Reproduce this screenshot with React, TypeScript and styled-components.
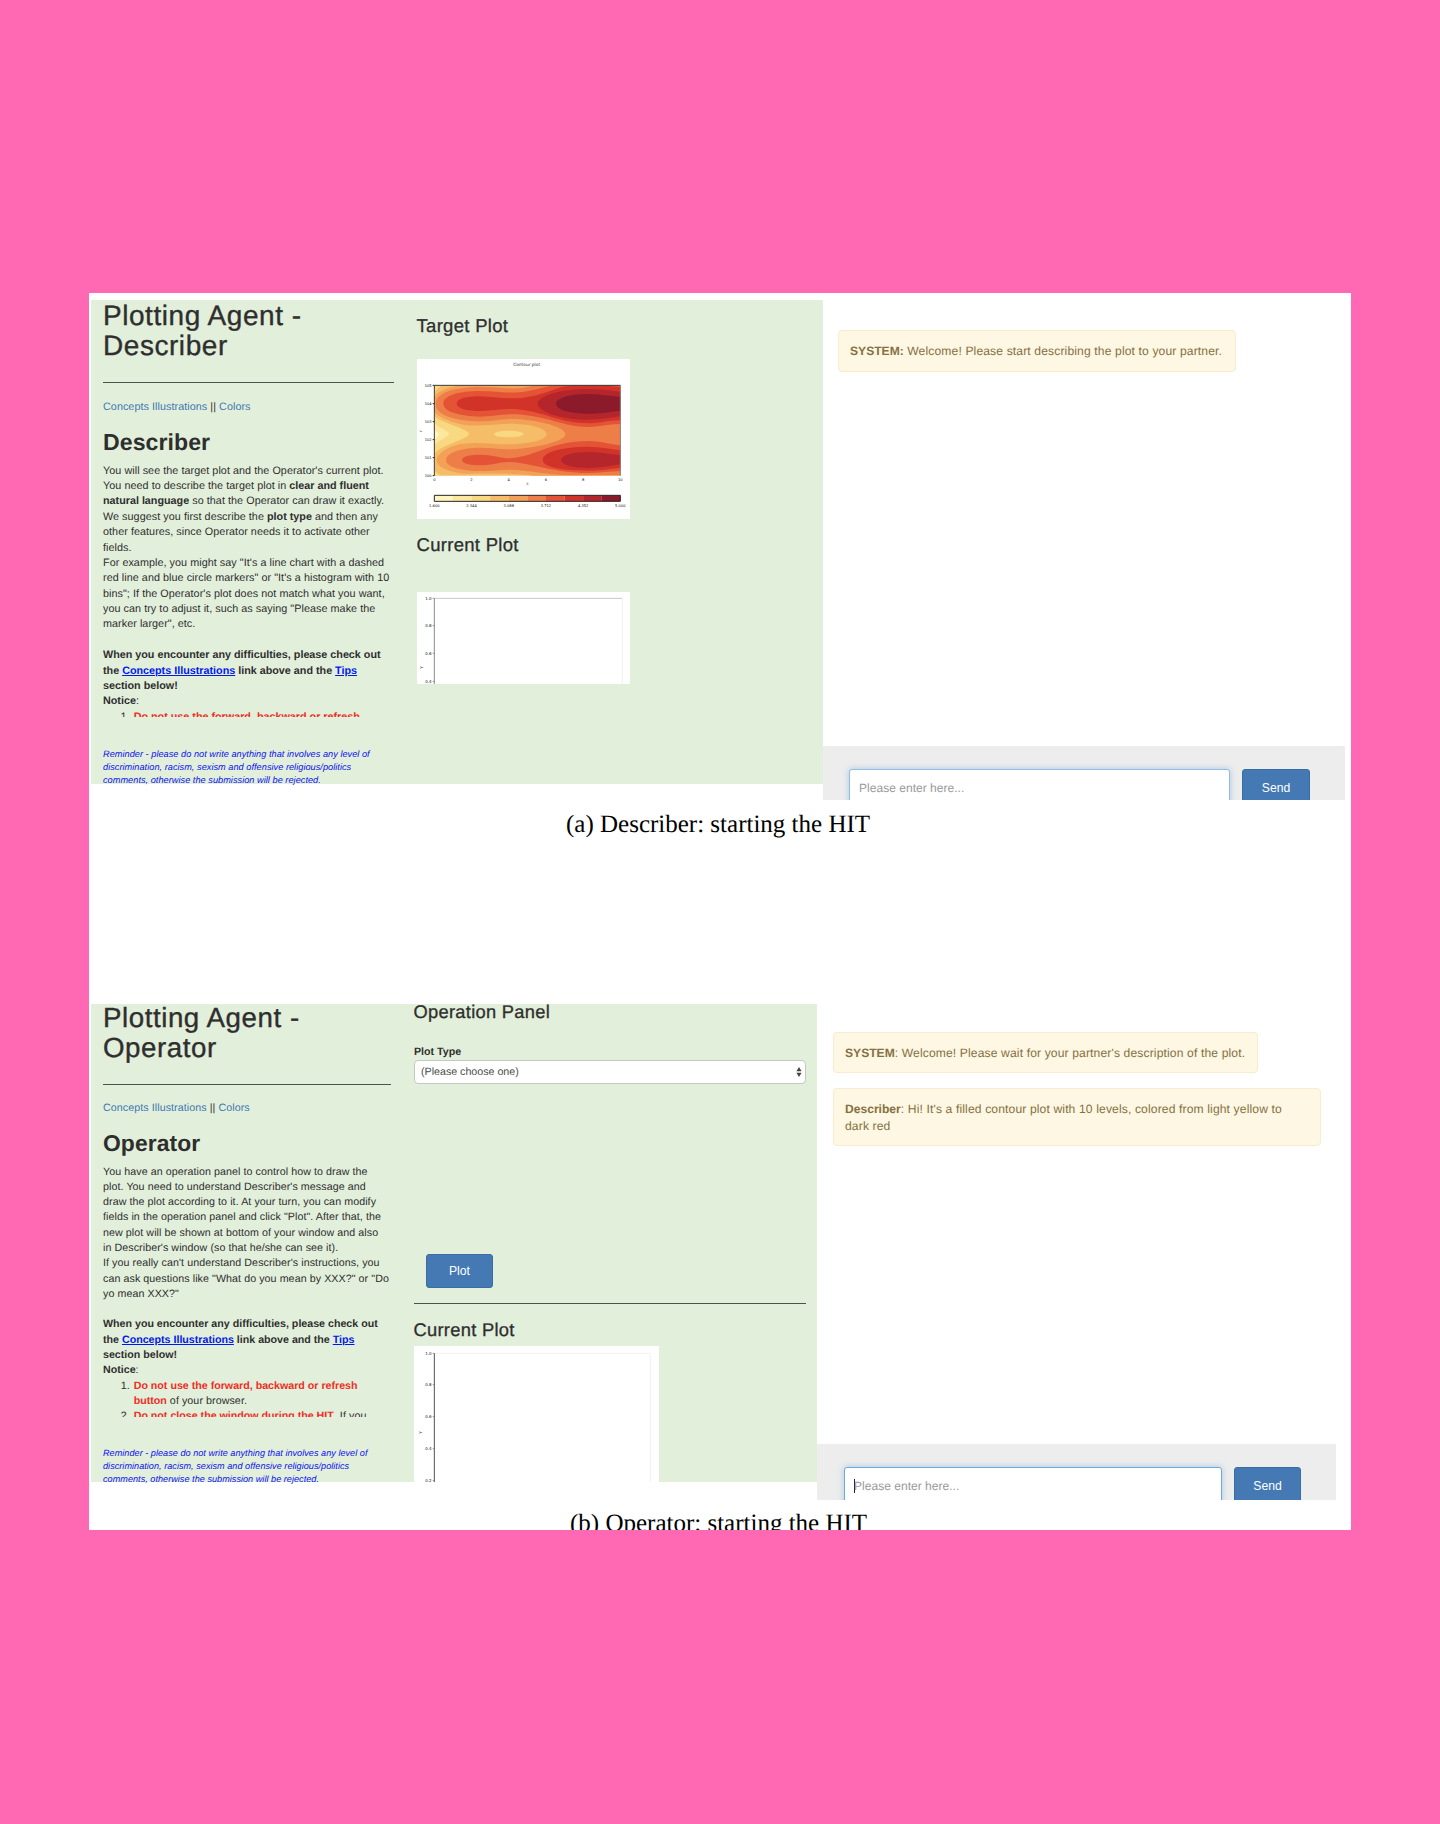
import React from 'react';
import styled, { createGlobalStyle } from 'styled-components';

const GlobalStyle = createGlobalStyle`
  html, body { margin: 0; padding: 0; background: #ff69b4; }
  * { box-sizing: border-box; }
  body {
    font-family: "Liberation Sans", Arial, sans-serif;
    color: #2e2e2e;
    text-rendering: geometricPrecision;
  }
  b { letter-spacing: 0; }
`;

const Page = styled.div`
  width: 1440px;
  height: 1824px;
  padding: 293px 89px;
  background: #ff69b4;
`;

const Sheet = styled.main`
  width: 1262px;
  height: 1237px;
  overflow: hidden;
  background: #fff;
  padding: 7px 0 0 2px;
`;

const Figure = styled.figure<{ $gap?: number }>`
  margin: ${p => p.$gap ?? 0}px 0 0;
`;

const Shot = styled.div<{ $h: number }>`
  display: flex;
  align-items: flex-start;
  height: ${p => p.$h}px;
`;

const Caption = styled.figcaption<{ $left: number; $top: number }>`
  margin: ${p => p.$top}px 0 0 ${p => p.$left}px;
  font: 25px/30px "Liberation Serif", "Times New Roman", serif;
  color: #000;
  white-space: nowrap;
`;

const Green = styled.section<{ $w: number; $h: number }>`
  display: flex;
  width: ${p => p.$w}px;
  height: ${p => p.$h}px;
  background: #e2efdb;
`;

const Side = styled.div<{ $w: number; $top: number; $size: number; $line: number; $track: number }>`
  width: ${p => p.$w}px;
  flex: none;
  margin: ${p => p.$top}px 0 0 12px;
  font-size: ${p => p.$size}px;
  line-height: ${p => p.$line}px;
  letter-spacing: ${p => p.$track}px;
  white-space: nowrap;
`;

const Title = styled.h1`
  margin: 0;
  font-size: 2.6em;
  line-height: 30px;
  font-weight: 400;
  letter-spacing: 0.55px;
  -webkit-text-stroke: 0.35px currentColor;
`;

const Rule = styled.hr<{ $top: number; $bottom: number }>`
  height: 1px;
  border: 0;
  background: #4d524b;
  margin: ${p => p.$top}px 0 ${p => p.$bottom}px;
`;

const Links = styled.div`
  a { color: #3f77b3; text-decoration: none; }
`;

const Role = styled.h2<{ $top: number }>`
  margin: ${p => p.$top}px 0 8px;
  font-size: 2.145em;
  line-height: 25.4px;
  font-weight: 700;
`;

const Instructions = styled.div<{ $h: number }>`
  height: ${p => p.$h}px;
  overflow: hidden;
  b a { color: #0018f0; text-decoration: underline; }
`;

const Rules = styled.ol`
  margin: 0;
  padding: 0;
  list-style: none;
`;

const RuleItem = styled.li`
  display: flex;
  b { color: #f12c1f; }
`;

const Marker = styled.span`
  width: 30.7px;
  flex: none;
  padding-right: 4px;
  text-align: right;
`;

const Reminder = styled.p<{ $top: number }>`
  margin: ${p => p.$top}px 0 0;
  font-size: 0.855em;
  line-height: 13px;
  letter-spacing: 0.025px;
  font-style: italic;
  color: #0a10f5;
`;

const Middle = styled.div<{ $left: number; $top: number; $w: number }>`
  display: flex;
  flex-direction: column;
  width: ${p => p.$w}px;
  margin: ${p => p.$top}px 0 0 ${p => p.$left}px;
`;

const PlotTitle = styled.h3<{ $size: number }>`
  margin: 0 0 0 -0.5px;
  font-size: ${p => p.$size}px;
  line-height: 20px;
  font-weight: 400;
  letter-spacing: 0.3px;
  -webkit-text-stroke: 0.3px currentColor;
  white-space: nowrap;
`;

const PlotCard = styled.div<{ $w: number; $h: number; $top: number; $bottom?: number }>`
  width: ${p => p.$w}px;
  height: ${p => p.$h}px;
  margin: ${p => p.$top}px 0 ${p => p.$bottom ?? 0}px;
  background: #fff;
  svg { display: block; }
`;

const Label = styled.label`
  margin-top: 23px;
  font-size: 10.66px;
  line-height: 15px;
  font-weight: 700;
`;

const Select = styled.div`
  display: flex;
  align-items: center;
  justify-content: space-between;
  height: 26px;
  padding: 0 3px 0 6px;
  border: 1px solid #c4c8c3;
  border-radius: 4px;
  background: #fff;
  color: #4c4c4c;
  font-size: 10.66px;
`;

const Button = styled.button<{ $w: number; $h: number }>`
  flex: none;
  width: ${p => p.$w}px;
  height: ${p => p.$h}px;
  padding: 0;
  border: 1px solid #396da3;
  border-radius: 3px;
  background: #4479b3;
  color: #fff;
  font: 12.2px/16px "Liberation Sans", Arial, sans-serif;
`;

const PlotButton = styled(Button)`
  margin: 170px 0 0 12px;
`;

const Chat = styled.section<{ $w: number; $top: number }>`
  display: flex;
  flex-direction: column;
  align-items: flex-start;
  width: ${p => p.$w}px;
  height: 100%;
  padding: ${p => p.$top}px 0 0;
`;

const Alert = styled.div<{ $w: number; $h: number; $left: number; $bottom?: number }>`
  width: ${p => p.$w}px;
  height: ${p => p.$h}px;
  margin: 0 0 ${p => p.$bottom ?? 0}px ${p => p.$left}px;
  padding: 12px 11px;
  border: 1px solid #faebcc;
  border-radius: 4px;
  background: #fdf7e4;
  color: #86703f;
  font-size: 12.1px;
  line-height: 16.7px;
  letter-spacing: 0.135px;
  white-space: nowrap;
`;

const Composer = styled.div<{ $h: number; $top: number; $left: number }>`
  display: flex;
  gap: 12px;
  width: 100%;
  height: ${p => p.$h}px;
  margin-top: auto;
  padding: ${p => p.$top}px 0 0 ${p => p.$left}px;
  background: #ededed;
  overflow: hidden;
`;

const Field = styled.div<{ $w: number; $line: string }>`
  display: flex;
  align-items: center;
  flex: none;
  width: ${p => p.$w}px;
  height: 38px;
  padding: 0 9px;
  border: 1px solid ${p => p.$line};
  border-radius: 3px;
  background: #fff;
  box-shadow: 0 0 6px rgba(102, 160, 220, 0.5);
  color: #999;
  font-size: 12px;
  letter-spacing: 0.03px;
`;

const Caret = styled.span`
  width: 1px;
  height: 14px;
  margin-right: -1px;
  background: #222;
`;

const ramp = ['#fff6c0', '#fce79f', '#f8d982', '#f6bd68', '#f2a156', '#ee7e47', '#e55337', '#d23329', '#b5262c', '#8b1a2a'];

const bands: [number, string][] = [
  [3, 'M103 286H661V557H103Z'],
  [4, 'M103 322C112 305 140 293 180 286H661V557H400C330 547 220 552 190 551C140 545 110 530 110 510C110 490 150 465 190 461C240 455 290 464 330 463C390 461 440 450 440 432C440 414 390 401 330 401C290 401 240 411 190 404C150 396 112 380 103 365Z'],
  [5, 'M107 341C107 310 160 291 240 291C290 291 330 299 370 293C390 290 405 286 420 286H661V555H500C440 553 400 543 330 539C300 540 270 543 240 543C180 543 138 530 138 510C138 490 180 473 240 473C290 474 320 480 350 477C430 470 496 452 496 432C496 414 430 392 350 387C310 385 280 395 240 394C160 392 107 375 107 341Z'],
  [6, 'M130 341C130 315 180 303 240 303C290 304 320 310 360 307C410 301 440 286 480 286H661V402C620 402 600 411 565 411C490 411 450 380 350 373C310 371 280 380 240 380C180 378 130 365 130 341Z'],
  [6, 'M186 510C186 499 210 494 240 494C280 494 300 505 330 505C410 500 450 453 565 453C600 453 630 463 661 466V543C630 544 600 549 565 549C460 549 400 520 330 516C300 515 280 526 240 526C210 526 186 520 186 510Z'],
  [7, 'M170 341C170 326 200 319 240 319C280 320 320 329 370 323C440 315 470 286 530 286H610L661 292V391C620 392 600 400 565 400C480 400 430 364 350 358C310 355 280 363 240 363C200 363 170 355 170 341Z'],
  [7, 'M428 510C428 485 490 470 565 470C600 470 630 477 661 481V534C630 537 600 542 565 542C490 542 428 532 428 510Z'],
  [8, 'M413 341C413 318 480 297 565 297C600 297 630 301 661 305V378C630 384 600 389 565 389C480 389 413 364 413 341Z'],
  [8, 'M483 510C483 495 520 486 565 486C600 486 630 492 661 496V523C630 528 600 534 565 534C520 534 483 525 483 510Z'],
  [9, 'M468 341C468 324 510 312 565 312C600 312 630 318 661 321V362C630 366 600 371 565 371C510 371 468 358 468 341Z'],
  [2, 'M103 378C120 398 207 417 207 432C207 447 120 465 103 492Z'],
  [1, 'M103 400C110 410 147 424 147 432C147 440 110 455 103 465Z'],
  [0, 'M103 418C106 424 117 428 117 432C117 437 106 446 103 450Z'],
  [2, 'M282 432C282 426 300 422 325 422C350 422 370 426 370 432C370 438 350 442 325 442C300 442 282 438 282 432Z'],
  [2, 'M103 286H124C118 295 108 300 103 306ZM103 542C110 548 118 554 126 557H103Z'],
];

const TargetPlot = () => (
  <svg width="213" height="160" viewBox="51 207 639 480" fontFamily="DejaVu Sans, sans-serif">
    {bands.map(([level, d], i) => <path key={i} d={d} fill={ramp[level]} />)}
    <path d="M103 557V286H661" fill="none" stroke="#3c3c3c" strokeWidth="3" />
    <path d="M661 286V557" stroke="#808080" strokeWidth="3" />
    {[286, 341, 395, 449, 503, 557].map((y, i) => (
      <g key={y}>
        <path d={`M98 ${y}H103`} stroke="#222" strokeWidth="3" />
        <text x="95" y={y + 4} fontSize="11" textAnchor="end" fill="#111">10{5 - i}</text>
      </g>
    ))}
    {[0, 2, 4, 6, 8, 10].map((n, i) => (
      <text key={n} x={103 + i * 111.6} y="573" fontSize="11" textAnchor="middle" fill="#111">{n}</text>
    ))}
    <text x="380" y="228" fontSize="13" textAnchor="middle" fill="#333">Contour plot</text>
    <text x="382" y="584" fontSize="10" textAnchor="middle" fill="#444">X</text>
    <text transform="translate(65 427) rotate(-90)" fontSize="10" fill="#444">Y</text>
    {ramp.map((c, i) => <path key={c} d={`M${103 + i * 55.8} 616h56v18h-56z`} fill={c} />)}
    <path d="M103 616H661V634H103Z" fill="none" stroke="#2b2222" strokeWidth="3" />
    {['1.600', '2.344', '3.088', '3.712', '4.352', '5.000'].map((s, i) => (
      <text key={s} x={103 + i * 111.6} y="650" fontSize="11" textAnchor="middle" fill="#111">{s}</text>
    ))}
  </svg>
);

type Tick = [string, number];

const EmptyPlot = (p: {
  w: number; h: number; box: string; top: number; right: number; bottom: number;
  ticks: Tick[]; axis: string; topLine: string; yLabel: number; labelX: number;
}) => (
  <svg width={p.w} height={p.h} viewBox={p.box} fontFamily="DejaVu Sans, sans-serif">
    <path d={`M103 ${p.top}H${p.right}`} stroke={p.topLine} strokeWidth="3" />
    <path d={`M${p.right} ${p.top}V${p.bottom}`} stroke="#f1f1f1" strokeWidth="3" />
    <path d={`M103 ${p.top}V${p.bottom}`} stroke={p.axis} strokeWidth="3" />
    {p.ticks.map(([s, y]) => (
      <g key={s}>
        <path d={`M98 ${y}H103`} stroke="#666" strokeWidth="2" />
        <text x="95" y={y + 4} fontSize="12" textAnchor="end" fill="#111">{s}</text>
      </g>
    ))}
    <text transform={`translate(${p.labelX} ${p.yLabel + 4}) rotate(-90)`} fontSize="12" fill="#333">Y</text>
  </svg>
);

const Help = () => (
  <>
    <b>When you encounter any difficulties, please check out<br />
      the <a>Concepts Illustrations</a> link above and the <a>Tips</a><br />
      section below!</b><br />
    <b>Notice</b>:
  </>
);

const ReminderText = ({ top }: { top: number }) => (
  <Reminder $top={top}>
    Reminder - please do not write anything that involves any level of<br />
    discrimination, racism, sexism and offensive religious/politics<br />
    comments, otherwise the submission will be rejected.
  </Reminder>
);

const DescriberFigure = () => (
  <Figure>
    <Shot $h={500}>
      <Green $w={732} $h={484}>
        <Side $w={291} $top={1} $size={10.77} $line={15.38} $track={0.06}>
          <Title>Plotting Agent -<br />Describer</Title>
          <Rule $top={21} $bottom={16.6} />
          <Links><a>Concepts Illustrations</a> || <a>Colors</a></Links>
          <Role $top={15.3}>Describer</Role>
          <Instructions $h={253}>
            You will see the target plot and the Operator's current plot.<br />
            You need to describe the target plot in <b>clear and fluent<br />
            natural language</b> so that the Operator can draw it exactly.<br />
            We suggest you first describe the <b>plot type</b> and then any<br />
            other features, since Operator needs it to activate other<br />
            fields.<br />
            For example, you might say "It's a line chart with a dashed<br />
            red line and blue circle markers" or "It's a histogram with 10<br />
            bins"; If the Operator's plot does not match what you want,<br />
            you can try to adjust it, such as saying "Please make the<br />
            marker larger", etc.<br /><br />
            <Help />
            <Rules>
              <RuleItem><Marker>1.</Marker><b>Do not use the forward, backward or refresh</b></RuleItem>
            </Rules>
          </Instructions>
          <ReminderText top={31} />
        </Side>
        <Middle $left={23} $top={16} $w={213}>
          <PlotTitle $size={18.5}>Target Plot</PlotTitle>
          <PlotCard $w={213} $h={160} $top={23} $bottom={16}><TargetPlot /></PlotCard>
          <PlotTitle $size={18.5}>Current Plot</PlotTitle>
          <PlotCard $w={213} $h={92} $top={37}>
            <EmptyPlot w={213} h={92} box="51 216 639 276" top={235} right={667} bottom={492}
              ticks={[['1.0', 235], ['0.8', 317], ['0.6', 400], ['0.4', 484]]}
              axis="#8b8b8b" topLine="#c9c9c9" yLabel={442} labelX={68} />
          </PlotCard>
        </Middle>
      </Green>
      <Chat $w={522} $top={30}>
        <Alert $w={398} $h={42} $left={15}><b>SYSTEM:</b> Welcome! Please start describing the plot to your partner.</Alert>
        <Composer $h={54} $top={23} $left={26}>
          <Field $w={381} $line="#8fbbe4">Please enter here...</Field>
          <Button $w={68} $h={38}>Send</Button>
        </Composer>
      </Chat>
    </Shot>
    <Caption $left={475} $top={10}>(a) Describer: starting the HIT</Caption>
  </Figure>
);

const OperatorFigure = () => (
  <Figure $gap={164}>
    <Shot $h={496}>
      <Green $w={726} $h={478}>
        <Side $w={288} $top={-1} $size={10.66} $line={15.3} $track={0.08}>
          <Title>Plotting Agent -<br />Operator</Title>
          <Rule $top={21} $bottom={16} />
          <Links><a>Concepts Illustrations</a> || <a>Colors</a></Links>
          <Role $top={14.8}>Operator</Role>
          <Instructions $h={252}>
            You have an operation panel to control how to draw the<br />
            plot. You need to understand Describer's message and<br />
            draw the plot according to it. At your turn, you can modify<br />
            fields in the operation panel and click "Plot". After that, the<br />
            new plot will be shown at bottom of your window and also<br />
            in Describer's window (so that he/she can see it).<br />
            If you really can't understand Describer's instructions, you<br />
            can ask questions like "What do you mean by XXX?" or "Do<br />
            yo mean XXX?"<br /><br />
            <Help />
            <Rules>
              <RuleItem><Marker>1.</Marker><span><b>Do not use the forward, backward or refresh<br />button</b> of your browser.</span></RuleItem>
              <RuleItem><Marker>2.</Marker><span><b>Do not close the window during the HIT</b>. If you</span></RuleItem>
            </Rules>
          </Instructions>
          <ReminderText top={30} />
        </Side>
        <Middle $left={23} $top={-2} $w={392}>
          <PlotTitle $size={18.3}>Operation Panel</PlotTitle>
          <Label>Plot Type</Label>
          <Select>
            (Please choose one)
            <svg width="6" height="10" viewBox="0 0 6 10">
              <path d="M3 0L5.6 4.2H.4ZM3 10L.4 5.8H5.6Z" fill="#444" />
            </svg>
          </Select>
          <PlotButton $w={67} $h={34}>Plot</PlotButton>
          <Rule $top={15} $bottom={16} />
          <PlotTitle $size={18.3}>Current Plot</PlotTitle>
          <PlotCard $w={245} $h={136} $top={6}>
            <EmptyPlot w={245} h={136} box="42 138 735 408" top={160} right={751} bottom={546}
              ticks={[['1.0', 160], ['0.8', 254], ['0.6', 350], ['0.4', 446], ['0.2', 542]]}
              axis="#4f5254" topLine="#f1f1f1" yLabel={397} labelX={65} />
          </PlotCard>
        </Middle>
      </Green>
      <Chat $w={519} $top={28}>
        <Alert $w={425} $h={41} $left={16} $bottom={15}><b>SYSTEM</b>: Welcome! Please wait for your partner's description of the plot.</Alert>
        <Alert $w={488} $h={58} $left={16}><b>Describer</b>: Hi! It's a filled contour plot with 10 levels, colored from light yellow to<br />dark red</Alert>
        <Composer $h={56} $top={23} $left={27}>
          <Field $w={378} $line="#6fa9de"><Caret />Please enter here...</Field>
          <Button $w={67} $h={38}>Send</Button>
        </Composer>
      </Chat>
    </Shot>
    <Caption $left={479} $top={9}>(b) Operator: starting the HIT</Caption>
  </Figure>
);

export default function App() {
  return (
    <Page>
      <GlobalStyle />
      <Sheet>
        <DescriberFigure />
        <OperatorFigure />
      </Sheet>
    </Page>
  );
}
